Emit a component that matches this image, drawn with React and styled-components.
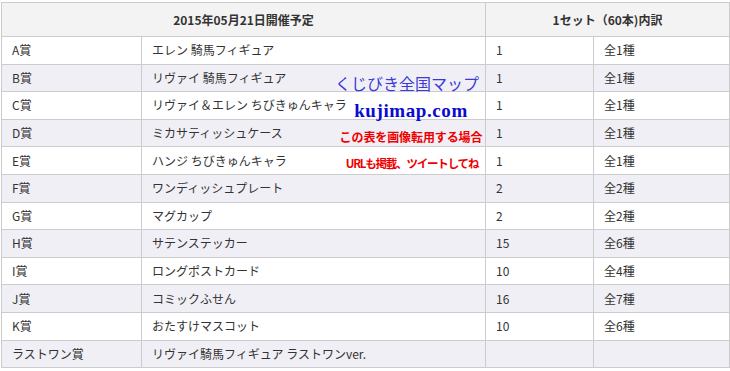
import React from "react";
import styled, { createGlobalStyle } from "styled-components";

const Global = createGlobalStyle`
  html, body { margin: 0; padding: 0; background: #fff; }
  body { font-family: "Noto Sans CJK JP", "Liberation Sans", sans-serif; }
`;

const Wrap = styled.div`
  position: relative;
  width: 728px;
  margin: 2px 0 0 1px;
`;

const Table = styled.table`
  border-collapse: collapse;
  width: 728px;
  table-layout: fixed;
  font-size: 12px;
  color: #333;
`;

const Th = styled.th`
  background: #f3f3f3;
  border: 1px solid #cccccc;
  height: 33px;
  padding: 0;
  font-weight: bold;
  text-align: center;
  color: #333;
  line-height: 16px;
`;

const Row = styled.tr`
  background: ${(p) => (p.$alt ? "#f0eff5" : "#ffffff")};
  height: 27.6px;
`;

const Td = styled.td`
  border: 1px solid #cccccc;
  padding: 0 10px;
  line-height: 16px;
  vertical-align: middle;
  white-space: nowrap;
`;

const Mark = styled.div`
  position: absolute;
  left: 320px;
  top: 0;
  width: 180px;
  display: flex;
  flex-direction: column;
  align-items: center;
  pointer-events: none;
`;

const MarkLine = styled.div`
  margin-top: ${(p) => p.$mt}px;
  margin-left: ${(p) => p.$ml || 0}px;
  color: ${(p) => p.$color};
  font-size: ${(p) => p.$size}px;
  font-weight: ${(p) => (p.$bold ? "bold" : "normal")};
  font-family: ${(p) =>
    p.$serif
      ? '"Liberation Serif", "Noto Sans CJK JP", serif'
      : '"Noto Sans CJK JP", sans-serif'};
  letter-spacing: ${(p) => p.$ls || 0}px;
  line-height: ${(p) => p.$lh}px;
  white-space: nowrap;
`;

const rows = [
  ["A賞", "エレン 騎馬フィギュア", "1", "全1種"],
  ["B賞", "リヴァイ 騎馬フィギュア", "1", "全1種"],
  ["C賞", "リヴァイ＆エレン ちびきゅんキャラ", "1", "全1種"],
  ["D賞", "ミカサティッシュケース", "1", "全1種"],
  ["E賞", "ハンジ ちびきゅんキャラ", "1", "全1種"],
  ["F賞", "ワンディッシュプレート", "2", "全2種"],
  ["G賞", "マグカップ", "2", "全2種"],
  ["H賞", "サテンステッカー", "15", "全6種"],
  ["I賞", "ロングポストカード", "10", "全4種"],
  ["J賞", "コミックふせん", "16", "全7種"],
  ["K賞", "おたすけマスコット", "10", "全6種"],
  ["ラストワン賞", "リヴァイ騎馬フィギュア ラストワンver.", "", ""],
];

export default function App() {
  return (
    <>
      <Global />
      <Wrap>
        <Table>
          <colgroup>
            <col style={{ width: 140 }} />
            <col style={{ width: 344 }} />
            <col style={{ width: 108 }} />
            <col style={{ width: 136 }} />
          </colgroup>
          <thead>
            <tr>
              <Th colSpan={2}>2015年05月21日開催予定</Th>
              <Th colSpan={2}>1セット（60本)内訳</Th>
            </tr>
          </thead>
          <tbody>
            {rows.map((r, i) => (
              <Row key={i} $alt={i % 2 === 1}>
                {r.map((c, j) => (
                  <Td key={j}>{c}</Td>
                ))}
              </Row>
            ))}
          </tbody>
        </Table>
        <Mark>
          <MarkLine $mt={71} $color="#3a3ad8" $size={16} $lh={20} $ml={-8}>
            くじびき全国マップ
          </MarkLine>
          <MarkLine $mt={6} $color="#0a0ad0" $size={19} $lh={24} $serif $bold $ls={0.6}>
            kujimap.com
          </MarkLine>
          <MarkLine $mt={6} $color="#ee0000" $size={12} $lh={16} $bold $ls={-0.1}>
            この表を画像転用する場合
          </MarkLine>
          <MarkLine $mt={10} $color="#ee0000" $size={11.5} $lh={16} $bold $ls={-1.2} $ml={2}>
            URLも掲載、ツイートしてね
          </MarkLine>
        </Mark>
      </Wrap>
    </>
  );
}
